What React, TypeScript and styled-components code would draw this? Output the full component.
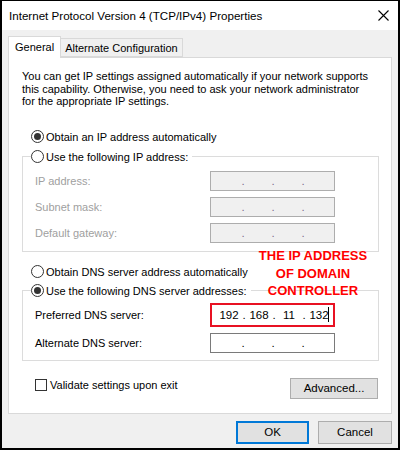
import React from 'react';
import styled, { createGlobalStyle } from 'styled-components';

const GlobalStyle = createGlobalStyle`
  html, body { margin:0; padding:0; background:#fff; }
  body {
    font-family: "Liberation Sans", Arial, sans-serif;
    font-size: 11px;
    color: #000;
  }
  * { box-sizing: border-box; }
`;

// Window chrome
const Window = styled.div`
  width:400px;
  height:450px;
  border:2px solid #000;
  border-top-width:1px;
  background:#f0f0f0;
  display:flex;
  flex-direction:column;
`;
const TitleBar = styled.div`
  height:29px;
  background:#fff;
  display:flex;
  align-items:center;
  justify-content:space-between;
  padding:0 9px 0 7px;
  font-size:11.6px;
`;
const Body = styled.div`
  padding:6px 6px 0 6px;
  display:flex;
  flex-direction:column;
`;

// Tabs
const TabStrip = styled.div`
  display:flex;
  align-items:flex-end;
  height:21px;
`;
interface TabProps {
  active?: boolean;
}
const Tab = styled.div<TabProps>`
  display:flex;
  align-items:center;
  position:relative;
  z-index:1;
  height:${({ active }) => active ? "22px" : "19px"};
  margin-bottom:${({ active }) => active ? "-1px" : "0"};
  padding:${({ active }) => active ? "0 6px 2px 6px" : "0 4px 0 4px"};
  background:${({ active }) => active ? "#fff" : "#f0f0f0"};
  border:1px solid #d9d9d9;
  border-bottom:${({ active }) => active ? "none" : "1px solid #d9d9d9"};
  border-left:${({ active }) => active ? "1px solid #d9d9d9" : "none"};
`;
const Panel = styled.div`
  position:relative;
  background:#fff;
  border:1px solid #d9d9d9;
  padding:0 0 14px 0;
  display:flex;
  flex-direction:column;
`;
const Intro = styled.p`
  margin:12px 0 0 13px;
  line-height:12.5px;
`;

// Radios and group boxes
interface RadioRowProps {
  top?: number;
  indent?: number;
}
const RadioRow = styled.label<RadioRowProps>`
  display:flex;
  align-items:center;
  gap:2px;
  height:14px;
  margin:${({ top }) => top ?? 0}px 0 0 ${({ indent }) => indent ?? 22}px;
  white-space:nowrap;
`;
interface RadioProps {
  checked?: boolean;
}
const Radio = styled.span<RadioProps>`
  width:13px;
  height:13px;
  border-radius:50%;
  border:1px solid #333;
  background:#fff;
  display:flex;
  align-items:center;
  justify-content:center;
  &::after {
    content:"";
    width:7px;
    height:7px;
    border-radius:50%;
    background:#333;
    display:${({ checked }) => checked ? "block" : "none"};
  }
`;
interface GroupProps {
  top: number;
  gap: number;
  bottom: number;
}
const Group = styled.fieldset<GroupProps>`
  margin:${({ top }) => top}px 12px 0 13px;
  padding:7px 43px ${({ bottom }) => bottom}px 12px;
  border:1px solid #dcdcdc;
  display:flex;
  flex-direction:column;
  gap:${({ gap }) => gap}px;
  min-width:0;
`;
const Legend = styled.legend`
  margin-left:-4px;
  padding:0 4px 0 0;
`;
const FieldRow = styled.div`
  display:flex;
  align-items:center;
  justify-content:space-between;
  height:20px;
`;
interface DisabledProps {
  disabled?: boolean;
}
const FieldLabel = styled.span<DisabledProps>`
  color:${({ disabled }) => disabled ? "#a0a0a0" : "#000"};
`;
interface IpBoxProps {
  disabled?: boolean;
  highlight?: boolean;
}
const IpBox = styled.div<IpBoxProps>`
  width:125px;
  height:${({ highlight }) => highlight ? "24px" : "20px"};
  margin:${({ highlight }) => highlight ? "-2px 0" : "0"};
  border:${({ highlight, disabled }) =>
    highlight ? "2px solid #e81123" : disabled ? "1px solid #adadad" : "1px solid #7a7a7a"};
  background:${({ disabled }) => disabled ? "#f0f0f0" : "#fff"};
  display:flex;
  align-items:center;
  padding-left:5px;
  font-size:11.5px;
`;
const Octet = styled.span`
  width:24px;
  text-align:center;
  line-height:14px;
`;
interface DotProps {
  disabled?: boolean;
}
const Dot = styled.span<DotProps>`
  width:6px;
  text-align:center;
  line-height:14px;
  color:${({ disabled }) => disabled ? "#7b6f8a" : "#000"};
`;
const Caret = styled.span`
  width:1px;
  height:15px;
  background:#000;
  margin-left:-3px;
`;

// Bottom row
const OptionsRow = styled.div`
  display:flex;
  justify-content:space-between;
  align-items:flex-start;
  margin:17px 13px 0 26px;
`;
const CheckRow = styled.label`
  display:flex;
  align-items:center;
  gap:3px;
  height:12px;
  margin-top:1px;
`;
const CheckBox = styled.span`
  width:12px;
  height:12px;
  border:1px solid #333;
  background:#fff;
`;
interface ButtonProps {
  width: number;
  height?: number;
  primary?: boolean;
}
const Button = styled.button<ButtonProps>`
  width:${({ width }) => width}px;
  height:${({ height }) => height ?? 23}px;
  background:#e1e1e1;
  border:${({ primary }) => primary ? "2px solid #0078d7" : "1px solid #adadad"};
  font:inherit;
  font-size:11.5px;
  color:#000;
  padding:0;
`;
const Footer = styled.div`
  display:flex;
  justify-content:flex-end;
  gap:9px;
  margin-top:7px;
`;

// Annotation over the dialog
const Note = styled.div`
  position:absolute;
  top:189px;
  left:234px;
  width:140px;
  text-align:center;
  font-weight:bold;
  font-size:13px;
  line-height:17.5px;
  color:#f00;
`;

const CloseIcon = () => (
  <svg width="11" height="11" viewBox="0 0 11 11">
    <path d="M0.5 0.5 L10.5 10.5 M10.5 0.5 L0.5 10.5" stroke="#000" strokeWidth="1.1" />
  </svg>
);

const IpField = ({ values, disabled, highlight }: { values?: string[]; disabled?: boolean; highlight?: boolean }) => {
  const v = values ?? ['', '', '', ''];
  return (
    <IpBox disabled={disabled} highlight={highlight}>
      <Octet>{v[0]}</Octet>
      <Dot disabled={disabled}>.</Dot>
      <Octet>{v[1]}</Octet>
      <Dot disabled={disabled}>.</Dot>
      <Octet>{v[2]}</Octet>
      <Dot disabled={disabled}>.</Dot>
      <Octet>{v[3]}</Octet>
      {highlight && <Caret />}
    </IpBox>
  );
};

export default function App() {
  return (
    <>
      <GlobalStyle />
      <Window>
        <TitleBar>
          <span>Internet Protocol Version 4 (TCP/IPv4) Properties</span>
          <CloseIcon />
        </TitleBar>
        <Body>
          <TabStrip>
            <Tab active>General</Tab>
            <Tab>Alternate Configuration</Tab>
          </TabStrip>
          <Panel>
            <Intro>
              You can get IP settings assigned automatically if your network supports<br />
              this capability. Otherwise, you need to ask your network administrator<br />
              for the appropriate IP settings.
            </Intro>
            <RadioRow top={22}>
              <Radio checked />
              Obtain an IP address automatically
            </RadioRow>
            <Group top={6} gap={6} bottom={8}>
              <Legend>
                <RadioRow indent={0}>
                  <Radio />
                  Use the following IP address:
                </RadioRow>
              </Legend>
              <FieldRow>
                <FieldLabel disabled>IP address:</FieldLabel>
                <IpField disabled />
              </FieldRow>
              <FieldRow>
                <FieldLabel disabled>Subnet mask:</FieldLabel>
                <IpField disabled />
              </FieldRow>
              <FieldRow>
                <FieldLabel disabled>Default gateway:</FieldLabel>
                <IpField disabled />
              </FieldRow>
            </Group>
            <RadioRow top={13}>
              <Radio />
              Obtain DNS server address automatically
            </RadioRow>
            <Group top={5} gap={8} bottom={7}>
              <Legend>
                <RadioRow indent={0}>
                  <Radio checked />
                  Use the following DNS server addresses:
                </RadioRow>
              </Legend>
              <FieldRow>
                <FieldLabel>Preferred DNS server:</FieldLabel>
                <IpField highlight values={['192', '168', '11', '132']} />
              </FieldRow>
              <FieldRow>
                <FieldLabel>Alternate DNS server:</FieldLabel>
                <IpField />
              </FieldRow>
            </Group>
            <OptionsRow>
              <CheckRow>
                <CheckBox />
                Validate settings upon exit
              </CheckRow>
              <Button width={88} height={21}>Advanced...</Button>
            </OptionsRow>
            <Note>
              THE IP ADDRESS<br />
              OF DOMAIN<br />
              CONTROLLER
            </Note>
          </Panel>
          <Footer>
            <Button width={73} primary>OK</Button>
            <Button width={74}>Cancel</Button>
          </Footer>
        </Body>
      </Window>
    </>
  );
}
